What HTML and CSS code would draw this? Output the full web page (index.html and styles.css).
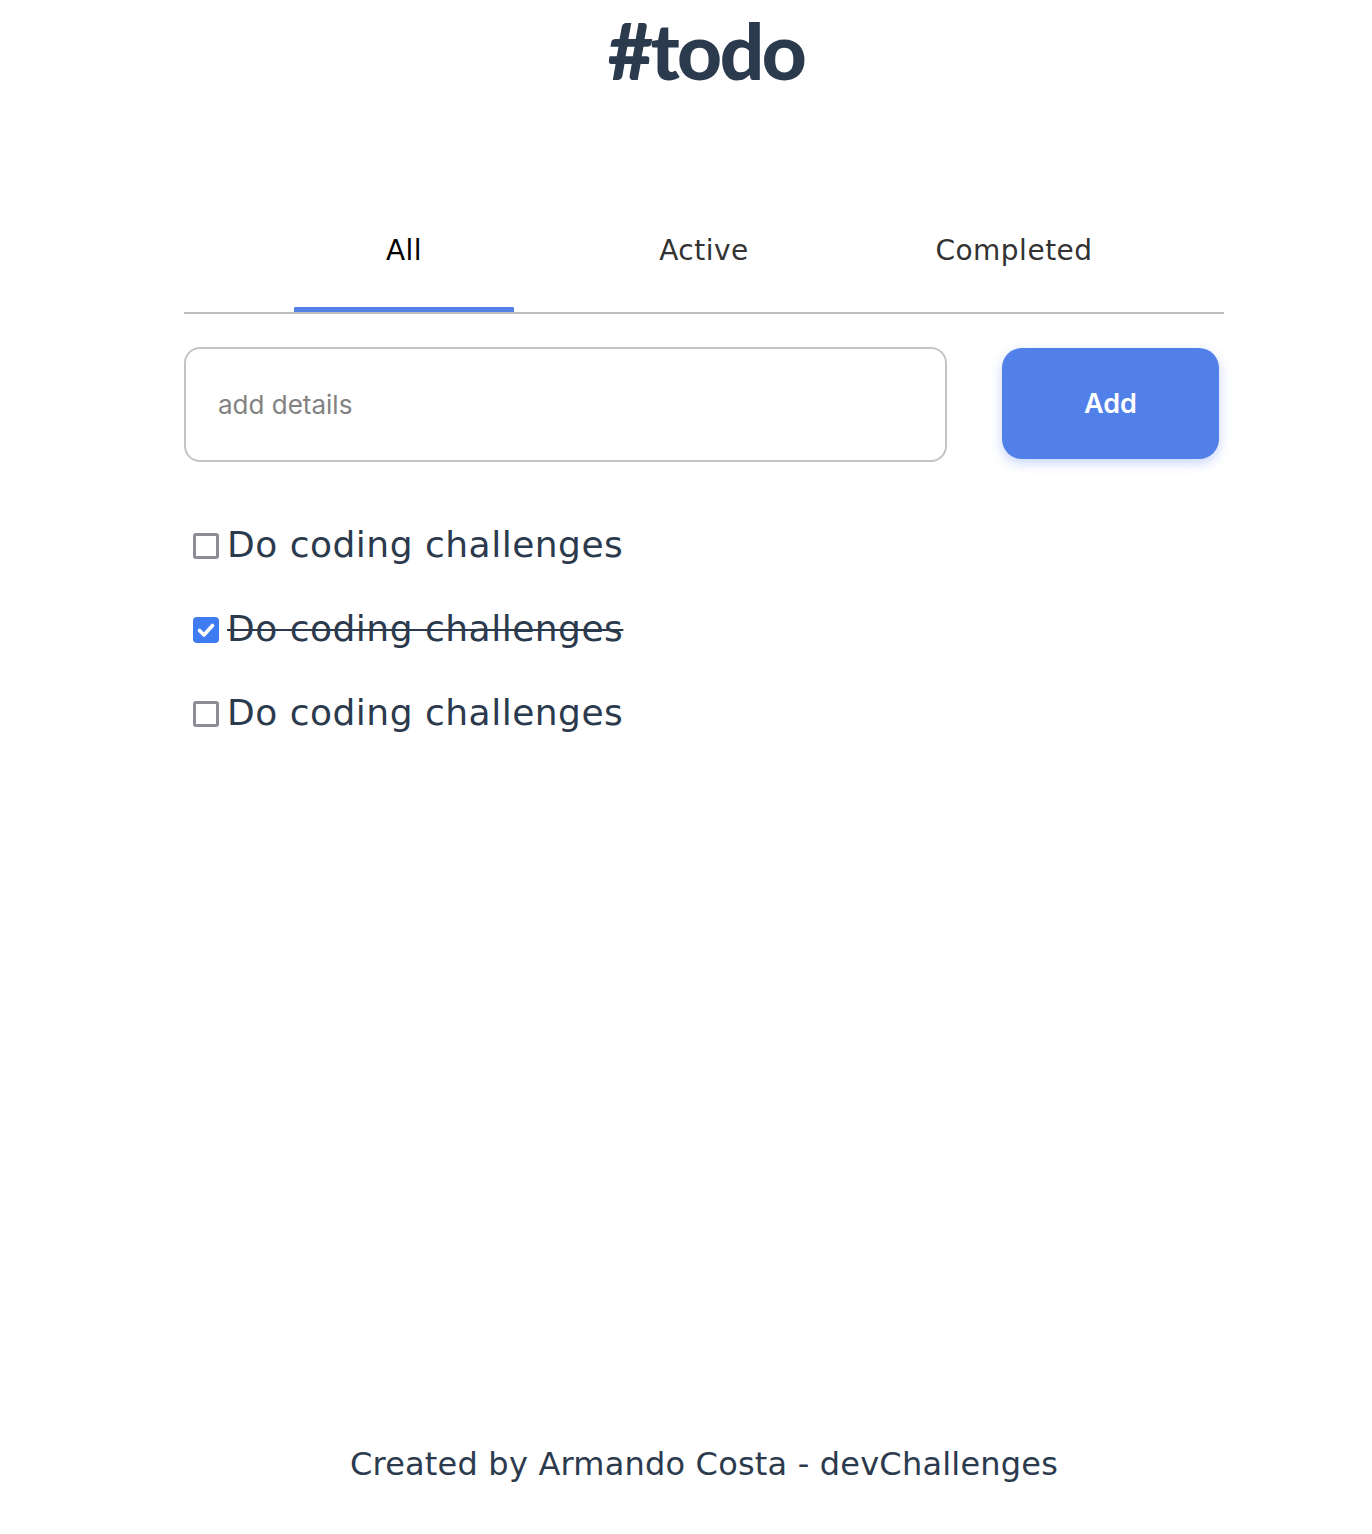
FILE: index.html
```html
<!DOCTYPE html>
<html lang="en">
<head>
<meta charset="utf-8">
<title>#todo</title>
<link rel="stylesheet" href="styles.css">
</head>
<body>
<div class="page">
  <h1 class="title">#todo</h1>
  <nav class="tabs">
    <div class="tab tab-all active">All</div>
    <div class="tab tab-active">Active</div>
    <div class="tab tab-completed">Completed</div>
  </nav>
  <div class="add-row">
    <div class="input">add details</div>
    <div class="btn">Add</div>
  </div>
  <ul class="list">
    <li class="item"><span class="box"></span><span class="label">Do coding challenges</span></li>
    <li class="item done"><span class="box checked"><svg viewBox="0 0 26 26" width="26" height="26"><path d="M6.5 13.5 L11 18 L19.5 8.5" fill="none" stroke="#fff" stroke-width="3.6" stroke-linecap="round" stroke-linejoin="round"/></svg></span><span class="label">Do coding challenges</span></li>
    <li class="item"><span class="box"></span><span class="label">Do coding challenges</span></li>
  </ul>
  <footer class="footer">Created by Armando Costa - devChallenges</footer>
</div>
</body>
</html>
```
FILE: styles.css
```css
html, body {
  margin: 0;
  padding: 0;
  background: #fff;
}
body {
  font-family: "DejaVu Sans", "Noto Sans", sans-serif;
  color: #2c3a4d;
}
.page {
  width: 1040px;
  margin-left: 184px;
  min-height: 1534px;
  display: flex;
  flex-direction: column;
}
.title {
  margin: 9px 0 0 0;
  text-align: center;
  font-family: "Lato", sans-serif;
  font-weight: 900;
  font-size: 78px;
  line-height: 82px;
  letter-spacing: -2.5px;
  color: #2c3a4d;
  padding-left: 4px;
}
.tabs {
  margin-top: 143px;
  display: flex;
  border-bottom: 2px solid #bdbdbd;
  padding-left: 110px;
  gap: 80px;
}
.tab {
  width: 220px;
  text-align: center;
  font-size: 28px;
  letter-spacing: 0.5px;
  line-height: 34px;
  padding-bottom: 44px;
  color: #333;
  position: relative;
}
.tab.active { color: #000; }
.tab.active::after {
  content: "";
  position: absolute;
  left: 0;
  right: 0;
  bottom: 0;
  height: 5px;
  background: #5180e9;
  border-radius: 1px 1px 0 0;
}
.tab-completed { margin-left: 10px; }
.add-row {
  display: flex;
  margin-top: 33px;
  gap: 55px;
  align-items: flex-start;
}
.input {
  width: 763px;
  height: 115px;
  box-sizing: border-box;
  border: 2px solid #c4c4c4;
  border-radius: 16px;
  padding-left: 32px;
  display: flex;
  align-items: center;
  font-family: "Inter", sans-serif;
  font-size: 26px;
  color: #828282;
}
.btn {
  width: 217px;
  height: 111px;
  margin-top: 1px;
  background: #5180e9;
  border-radius: 20px;
  color: #fff;
  display: flex;
  align-items: center;
  justify-content: center;
  font-family: "Inter", sans-serif;
  font-weight: 600;
  font-size: 27px;
  box-shadow: 0 4px 12px rgba(127, 160, 243, 0.45);
}
.list {
  list-style: none;
  margin: 60px 0 0 0;
  padding: 0 0 0 9px;
  display: flex;
  flex-direction: column;
  gap: 40px;
}
.item {
  display: flex;
  align-items: center;
  gap: 8px;
  height: 44px;
  font-size: 36px;
  letter-spacing: 0.5px;
  color: #2c3a4d;
}
.box {
  width: 26px;
  height: 26px;
  box-sizing: border-box;
  border: 3px solid #8e8b98;
  border-radius: 3px;
  flex: none;
  margin-top: 4px;
}
.box.checked {
  border: none;
  background: #3f7cf2;
  border-radius: 4px;
}
.box svg { display: block; }
.done .label { text-decoration: line-through; text-decoration-thickness: 2px; }
.footer {
  margin-top: auto;
  margin-bottom: 51px;
  text-align: center;
  font-size: 32px;
  letter-spacing: 0.2px;
  color: #2c3a4d;
}
```
